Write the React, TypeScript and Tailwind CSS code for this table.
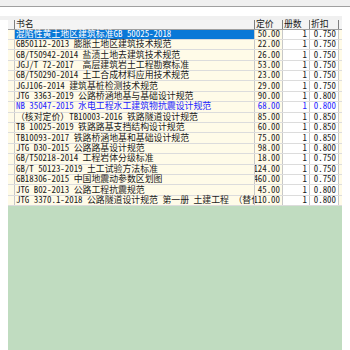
const ROWS = [
  { name: "混陷性黄土地区建筑标准GB 50025-2018", price: "50.00", qty: "1", disc: "0.750" },
  { name: "GB50112-2013 膨胀土地区建筑技术规范", price: "22.00", qty: "1", disc: "0.750" },
  { name: "GB/T50942-2014 盐渍土地去建筑技术规范", price: "26.00", qty: "1", disc: "0.750" },
  { name: "JGJ/T 72-2017  高层建筑岩土工程勘察标准", price: "53.00", qty: "1", disc: "0.750" },
  { name: "GB/T50290-2014 土工合成材料应用技术规范", price: "23.00", qty: "1", disc: "0.750" },
  { name: "JGJ106-2014 建筑基桩检测技术规范", price: "29.00", qty: "1", disc: "0.750" },
  { name: "JTG 3363-2019 公路桥涵地基与基础设计规范", price: "90.00", qty: "1", disc: "0.800" },
  { name: "NB 35047-2015 水电工程水工建筑物抗震设计规范", price: "68.00", qty: "1", disc: "0.800", blue: true },
  { name: "（核对定价）TB10003-2016 铁路隧道设计规范", price: "85.00", qty: "1", disc: "0.850" },
  { name: "TB 10025-2019 铁路路基支挡结构设计规范", price: "60.00", qty: "1", disc: "0.850" },
  { name: "TB10093-2017 铁路桥涵地基和基础设计规范", price: "75.00", qty: "1", disc: "0.850" },
  { name: "JTG D30-2015 公路路基设计规范", price: "98.00", qty: "1", disc: "0.800" },
  { name: "GB/T50218-2014 工程岩体分级标准", price: "18.00", qty: "1", disc: "0.750" },
  { name: "GB/T 50123-2019 土工试验方法标准", price: "124.00", qty: "1", disc: "0.750" },
  { name: "GB18306-2015 中国地震动参数区划图", price: "460.00", qty: "1", disc: "0.750" },
  { name: "JTG B02-2013 公路工程抗震规范", price: "45.00", qty: "1", disc: "0.800" },
  { name: "JTG 3370.1-2018 公路隧道设计规范 第一册 土建工程 （替代JTG D70-2004）", price: "110.00", qty: "1", disc: "0.800" },
];

export default function App() {
  return (
    <div
      className="w-[350px] h-[350px] bg-white flex flex-col overflow-hidden text-[8.9px] leading-none text-[#1a1a1a]"
      style={{ fontFamily: '"Noto Sans Mono CJK SC", "Noto Sans CJK SC", monospace' }}
    >
      {/* toolbar strip */}
      <div className="h-[7px] shrink-0 bg-[#f0f0f0] border-b border-[#a0a0a0]" />
      <div className="h-[9px] shrink-0" />

      {/* grid */}
      <div className="flex-1 flex flex-col w-[342px] min-h-0">
        <div className="h-[3.5px] shrink-0 bg-[#f0f0f0]" />
        <div className="flex flex-1 flex-col ml-[8px] min-h-0">
          {/* header */}
          <div className="flex h-[10px] shrink-0 bg-[#f4f4f4] border-b border-[#a0a0a0]">
            <div className="w-[7px] border-r border-[#808080]" />
            <div className="w-[240px] pl-[1px] flex items-center border-r border-[#808080]">书名</div>
            <div className="w-[28px] pl-[1px] flex items-center border-r border-[#808080]">定价</div>
            <div className="w-[27px] pl-[1px] flex items-center border-r border-[#808080]">册数</div>
            <div className="w-[29px] pl-[1px] flex items-center border-r border-[#808080]">折扣</div>
            <div className="flex-1" />
          </div>

          {ROWS.map((r, i) => (
            <div
              key={i}
              className={`flex h-[10.4px] shrink-0 border-b border-[#dcdcdc] ${r.blue ? "text-[#2424ff]" : ""}`}
            >
              <div className="w-[7px] bg-[#fffbe8] border-r border-[#c8c8c8]" />
              <div
                className={`w-[240px] pl-[1px] flex items-center overflow-x-clip whitespace-pre border-r border-[#c8c8c8] ${
                  i === 0 ? "bg-[#0a78d7] text-white" : "bg-[#fffbe8]"
                }`}
              >
                {r.name}
              </div>
              <div className="w-[28px] pr-[2px] flex items-center justify-end overflow-x-clip whitespace-pre bg-[#fffbe8] border-r border-[#c8c8c8]">
                {r.price}
              </div>
              <div className="w-[27px] pr-[2px] flex items-center justify-end bg-white border-r border-[#c8c8c8]">
                {r.qty}
              </div>
              <div className="w-[29px] pr-[2px] flex items-center justify-end bg-white border-r border-[#c8c8c8]">
                {r.disc}
              </div>
              <div className="flex-1 bg-[#fffbe8]" />
            </div>
          ))}

          <div className="flex-1 bg-[#c0dcc0]" />
        </div>
      </div>
    </div>
  );
}
